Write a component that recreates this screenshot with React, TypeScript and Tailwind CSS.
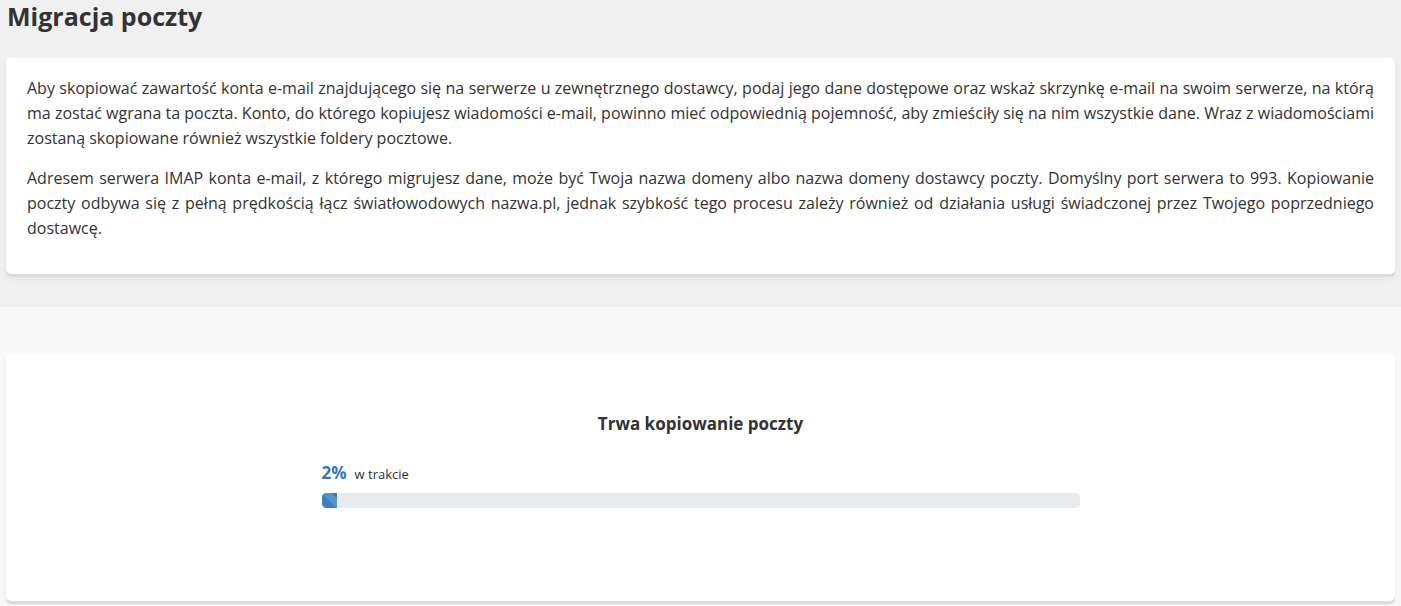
import React from "react";

export default function App() {
  return (
    <div className="min-h-[606px] bg-[#f9f9f9] text-[#333] font-['Open_Sans',sans-serif]">
      <div className="bg-[#f0f0f0] px-[6px] pb-[33px]">
        <h1 className="pl-[1px] text-[25px] font-bold leading-[32px] text-[#333]">Migracja poczty</h1>
        <div className="mt-[26px] rounded-[5px] bg-white px-[21px] pt-[18px] pb-[18px] shadow-[0_3px_0_#d7dce0,0_4px_6px_rgba(0,0,0,0.06)]">
          <p className="mb-[15px] text-justify text-[16px] leading-[25px]">
            Aby skopiować zawartość konta e-mail znajdującego się na serwerze u zewnętrznego dostawcy, podaj jego dane dostępowe oraz wskaż skrzynkę e-mail na swoim serwerze, na którą ma zostać wgrana ta poczta. Konto, do którego kopiujesz wiadomości e-mail, powinno mieć odpowiednią pojemność, aby zmieściły się na nim wszystkie dane. Wraz z wiadomościami zostaną skopiowane również wszystkie foldery pocztowe.
          </p>
          <p className="mb-[15px] text-justify text-[16px] leading-[25px]">
            Adresem serwera IMAP konta e-mail, z którego migrujesz dane, może być Twoja nazwa domeny albo nazwa domeny dostawcy poczty. Domyślny port serwera to 993. Kopiowanie poczty odbywa się z pełną prędkością łącz światłowodowych nazwa.pl, jednak szybkość tego procesu zależy również od działania usługi świadczonej przez Twojego poprzedniego dostawcę.
          </p>
        </div>
      </div>
      <div className="px-[6px] pt-[47px]">
        <div className="h-[247px] rounded-[5px] bg-white pt-[58px] shadow-[0_3px_0_#d7dce0,0_4px_6px_rgba(0,0,0,0.06)]">
          <h2 className="text-center text-[17px] font-bold leading-[24px] text-[#333]">Trwa kopiowanie poczty</h2>
          <div className="mx-auto mt-[26px] w-[758px]">
            <div className="flex items-baseline gap-[8px]">
              <span className="text-[17px] font-bold leading-[22px] text-[#2f78bd]">2%</span>
              <span className="text-[13px] leading-[22px] text-[#333]">w trakcie</span>
            </div>
            <div className="mt-[8px] h-[15px] w-full overflow-hidden rounded-[4px] bg-[#e8ebee]">
              <div
                className="h-full rounded-l-[4px] bg-[#3a7fc1] bg-[linear-gradient(45deg,rgba(255,255,255,0.15)_25%,transparent_25%,transparent_50%,rgba(255,255,255,0.15)_50%,rgba(255,255,255,0.15)_75%,transparent_75%,transparent)] bg-[length:20px_20px]"
                style={{ width: "2%" }}
              />
            </div>
          </div>
        </div>
      </div>
    </div>
  );
}
